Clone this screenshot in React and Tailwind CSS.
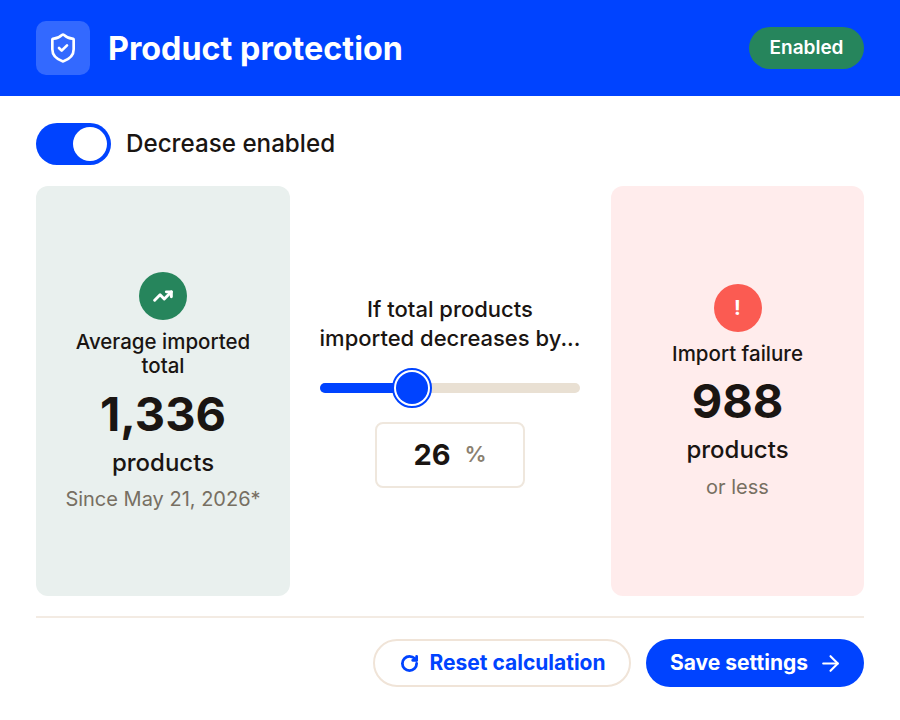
import { ArrowRight, RotateCw, ShieldCheck, TrendingUp } from "lucide-react";

function App() {
  return (
    <div className="h-[720px] w-[900px] overflow-hidden bg-white font-['Inter',sans-serif] text-[#1a1512]">
      {/* HEADER */}
      <header className="flex h-24 items-center justify-between bg-[#0043ff] px-9">
        <div className="flex items-center gap-[18px]">
          <div className="flex h-[54px] w-[54px] items-center justify-center rounded-[10px] bg-[#3369ff]">
            <ShieldCheck className="h-8 w-8 text-white" strokeWidth={2} />
          </div>
          <h1 className="pt-[2px] text-[32.3px] font-bold text-white">Product protection</h1>
        </div>
        <span className="flex h-[42px] w-[115px] items-center justify-center rounded-full bg-[#26855c] text-[19px] font-semibold text-white">
          Enabled
        </span>
      </header>

      <main className="px-9">
        {/* TOGGLE */}
        <div className="flex items-center gap-[15px] pt-[27px]">
          <div className="flex h-[42px] w-[75px] items-center justify-end rounded-full bg-[#0043ff] pr-1">
            <div className="h-[34px] w-[34px] rounded-full bg-white"></div>
          </div>
          <span className="text-[24.2px] font-[550]">Decrease enabled</span>
        </div>

        {/* CARDS */}
        <div className="mt-[21px] grid h-[410px] grid-cols-[254px_1fr_253px]">
          <section className="flex flex-col items-center justify-center rounded-xl bg-[#e9f0ee] pt-[2px]">
            <div className="flex h-12 w-12 items-center justify-center rounded-full bg-[#26855c]">
              <TrendingUp className="h-5 w-5 text-white" strokeWidth={3.5} />
            </div>
            <p className="mt-[10px] w-[200px] text-center text-[20.5px] leading-6 font-[550]">Average imported total</p>
            <p className="mt-[6px] text-[47px] leading-[60px] font-bold">1,336</p>
            <p className="mt-[3px] text-2xl leading-8 font-[550]">products</p>
            <p className="mt-[6px] text-xl leading-7 text-[#776f62]">Since May 21, 2026*</p>
          </section>

          <section className="flex flex-col items-center justify-center pr-px">
            <p className="text-center text-[22px] leading-[29px] font-[550]">
              If total products
              <br />
              imported decreases by...
            </p>
            <div className="relative mt-[30px] h-[10px] w-[260px] rounded-full bg-[#e9e0d3]">
              <div className="h-full w-[91px] rounded-l-full bg-[#0043ff]"></div>
              <div className="absolute top-1/2 left-[72px] h-10 w-10 -translate-y-1/2 rounded-full border-2 border-[#0043ff] bg-white p-[2px]">
                <div className="h-full w-full rounded-full bg-[#0043ff]"></div>
              </div>
            </div>
            <div className="mt-[29px] flex h-[66px] w-[150px] items-center justify-center gap-[14px] rounded-lg border-2 border-[#efe7dd]">
              <span className="text-[29px] font-bold">26</span>
              <span className="text-[22px] font-semibold text-[#8a8070]">%</span>
            </div>
          </section>

          <section className="flex flex-col items-center justify-center rounded-xl bg-[#ffecec] pt-[2px]">
            <div className="flex h-12 w-12 items-center justify-center rounded-full bg-[#fb5b52] text-xl font-bold text-white">
              !
            </div>
            <p className="mt-[8px] text-[20.5px] leading-7 font-[550]">Import failure</p>
            <p className="mt-[3px] text-[47px] leading-[60px] font-bold">988</p>
            <p className="mt-[3px] text-2xl leading-8 font-[550]">products</p>
            <p className="mt-[7px] text-xl leading-7 text-[#776f62]">or less</p>
          </section>
        </div>

        {/* FOOTER */}
        <div className="mt-5 flex justify-end gap-[15px] border-t-2 border-[#f3ebe3] pt-[21px]">
          <button className="flex h-12 w-[258px] items-center justify-center gap-[10px] rounded-full border-2 border-[#f0e4d8] pl-[2px] text-[21px] font-bold text-[#0043ff]">
            <RotateCw className="h-[19px] w-[19px]" strokeWidth={3.5} />
            Reset calculation
          </button>
          <button className="flex h-12 w-[218px] items-center justify-center gap-[10px] rounded-full bg-[#0043ff] pl-[3px] text-[21px] font-bold text-white">
            Save settings
            <ArrowRight className="h-[25px] w-[25px]" strokeWidth={2} />
          </button>
        </div>
      </main>
    </div>
  );
}

export default App;
